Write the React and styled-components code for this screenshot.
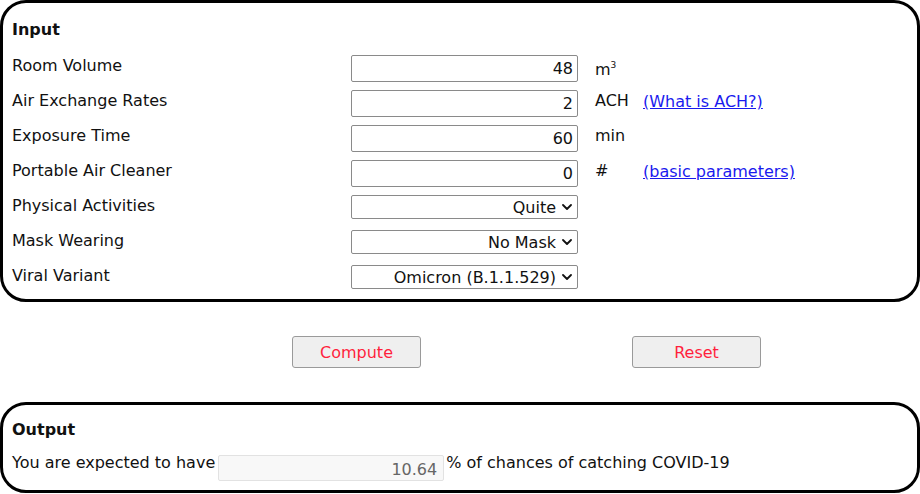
import React from 'react'
import styled, { createGlobalStyle } from 'styled-components'

const Global = createGlobalStyle`
  body {
    margin: 0;
    background: #fff;
    font-family: "DejaVu Sans", Verdana, sans-serif;
    font-size: 16px;
    color: #111;
  }
`

const App = () => {
  return (
    <Page>
      <Global />
      <Panel>
        <Title>Input</Title>
        <Form>
          <Label>Room Volume</Label>
          <NumberBox defaultValue="48" />
          <Unit>m<sup>3</sup></Unit>
          <span />

          <Label>Air Exchange Rates</Label>
          <NumberBox defaultValue="2" />
          <Unit>ACH</Unit>
          <Link href="#ach">(What is ACH?)</Link>

          <Label>Exposure Time</Label>
          <NumberBox defaultValue="60" />
          <Unit>min</Unit>
          <span />

          <Label>Portable Air Cleaner</Label>
          <NumberBox defaultValue="0" />
          <Unit>#</Unit>
          <Link href="#params">(basic parameters)</Link>

          <Label>Physical Activities</Label>
          <Picker>
            <Select defaultValue="Quite">
              <option>Quite</option>
              <option>Light</option>
              <option>Heavy</option>
            </Select>
            <Chevron />
          </Picker>
          <span />
          <span />

          <Label>Mask Wearing</Label>
          <Picker>
            <Select defaultValue="No Mask">
              <option>No Mask</option>
              <option>Surgical</option>
              <option>N95</option>
            </Select>
            <Chevron />
          </Picker>
          <span />
          <span />

          <Label>Viral Variant</Label>
          <Picker>
            <Select defaultValue="Omicron (B.1.1.529)">
              <option>Omicron (B.1.1.529)</option>
              <option>Delta (B.1.617.2)</option>
            </Select>
            <Chevron />
          </Picker>
          <span />
          <span />
        </Form>
      </Panel>

      <Buttons>
        <Button>Compute</Button>
        <Button>Reset</Button>
      </Buttons>

      <OutPanel>
        <Title $gap={14}>Output</Title>
        <Result>
          You are expected to have
          <ResultBox readOnly value="10.64" />
          % of chances of catching COVID-19
        </Result>
      </OutPanel>
    </Page>
  )
}

export default App

const Chevron = () => (
  <Arrow viewBox="0 0 10 6" width="10" height="6">
    <path d="M1 1 L5 5 L9 1" fill="none" stroke="#111" strokeWidth="1.8" strokeLinecap="round" strokeLinejoin="round" />
  </Arrow>
)

const Page = styled.div`
  width: 920px;
  display: flex;
  flex-direction: column;
`

const Panel = styled.div`
  box-sizing: border-box;
  width: 920px;
  height: 302px;
  border: 3px solid #000;
  border-radius: 26px;
  padding: 17px 0 0 9px;
`

const OutPanel = styled(Panel)`
  height: 91px;
  padding-top: 15px;
`

const Title = styled.div`
  font-weight: bold;
  line-height: 19px;
  margin-bottom: ${p => p.$gap || 16}px;
`

const Form = styled.div`
  display: grid;
  grid-template-columns: 339px 227px 65px 1fr;
  grid-auto-rows: 35px;
  align-items: start;
`

const Label = styled.div`
  line-height: 19px;
  padding-top: 1px;
`

const NumberBox = styled.input`
  box-sizing: border-box;
  width: 227px;
  height: 27px;
  margin: 0;
  border: 1px solid #8a8a8a;
  border-radius: 2px;
  padding: 0 4px;
  font: inherit;
  font-size: 16px;
  color: #111;
  text-align: right;
`

const Unit = styled.div`
  padding: 1px 0 0 17px;
  line-height: 19px;
  sup {
    font-size: 9px;
    vertical-align: 7px;
  }
`

const Link = styled.a`
  justify-self: start;
  margin-top: 2px;
  color: #1a1aee;
  text-decoration: underline;
  line-height: 19px;
`

const Picker = styled.div`
  position: relative;
  width: 227px;
  height: 24px;
`

const Select = styled.select`
  box-sizing: border-box;
  appearance: none;
  width: 100%;
  height: 100%;
  margin: 0;
  border: 1px solid #8a8a8a;
  border-radius: 2px;
  background: #fff;
  font: inherit;
  font-size: 16px;
  color: #111;
  text-align: right;
  text-align-last: right;
  padding: 0 21px 0 4px;
`

const Arrow = styled.svg`
  position: absolute;
  right: 6px;
  top: 9px;
  pointer-events: none;
`

const Buttons = styled.div`
  display: flex;
  gap: 211px;
  padding: 34px 0 34px 292px;
`

const Button = styled.button`
  box-sizing: border-box;
  width: 129px;
  height: 32px;
  background: #efefef;
  border: 1px solid #9a9a9a;
  border-radius: 3px;
  color: #ff1f3d;
  font: inherit;
  font-size: 16px;
`

const Result = styled.div`
  display: flex;
  align-items: flex-start;
  line-height: 19px;
`

const ResultBox = styled.input`
  box-sizing: border-box;
  width: 226px;
  height: 26px;
  margin: 2px 2px 0 3px;
  border: 1px solid #e2e2e2;
  border-radius: 2px;
  background: #f8f8f8;
  padding: 2px 6px 0 4px;
  font: inherit;
  font-size: 16px;
  color: #666;
  text-align: right;
`
